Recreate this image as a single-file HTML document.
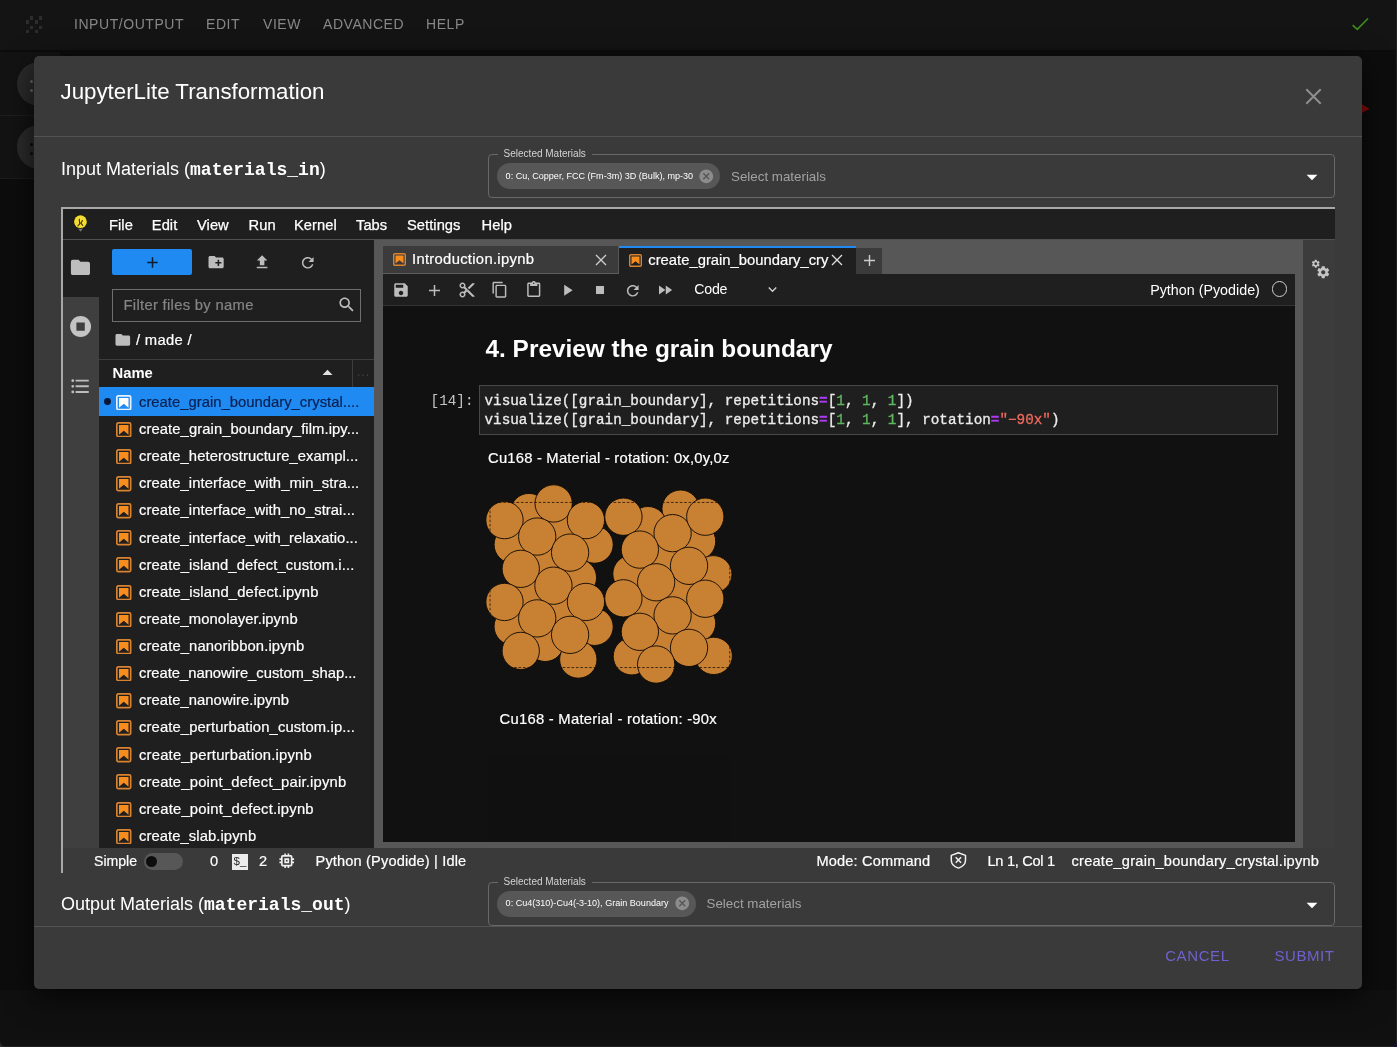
<!DOCTYPE html>
<html>
<head>
<meta charset="utf-8">
<title>JupyterLite Transformation</title>
<style>
*{box-sizing:border-box;margin:0;padding:0}
html,body{width:1397px;height:1047px;overflow:hidden;background:#0d0d0d}
body{position:relative;font-family:"Liberation Sans",sans-serif;color:#fff;-webkit-font-smoothing:antialiased}
#root{position:absolute;left:0;top:0;width:1397px;height:1047px;overflow:hidden;will-change:transform;transform:translateZ(0)}
.abs{position:absolute}
.t{position:absolute;white-space:nowrap;line-height:1}
/* ---- app background ---- */
#topbar{left:0;top:0;width:1397px;height:50px;background:#141414;border-bottom:2px solid #0c0c0c;height:52px}
#topbar .t{font-size:14px;color:#878787;top:17px;letter-spacing:.55px}
#row1{left:0;top:52px;width:60px;height:127px;background:#131313;border-bottom:1px solid #1c1c1c}
#row2{left:0;top:115px;width:60px;height:1px;background:#1e1e1e}
.fab{width:44px;height:44px;border-radius:22px;background:#2b2b2b}
#bottomstrip{left:0;top:990px;width:1397px;height:57px;background:#101010}
/* ---- dialog ---- */
#dlg{left:34px;top:56px;width:1328px;height:933px;background:#3a3a3a;border-radius:5px;box-shadow:0 8px 30px rgba(0,0,0,.7)}
.hr{position:absolute;height:1px;background:#525252}
.sel{position:absolute;border:1px solid #686868;border-radius:4px}
.sel .lab{position:absolute;left:8.6px;top:-6.8px;padding:0 6px;background:#3a3a3a;font-size:10px;line-height:12px;color:#d4d4d4;white-space:nowrap}
.chip{position:absolute;height:26px;border-radius:13px;background:#575757}
.chip span{position:absolute;left:8.6px;top:8px;font-size:9.05px;line-height:10px;color:#fff;white-space:nowrap}
.ph{position:absolute;margin-top:.7px;font-size:13.35px;line-height:14px;color:#a2a2a2;white-space:nowrap}
.btn{position:absolute;font-size:15px;line-height:16px;color:#6f60cf;letter-spacing:.59px;white-space:nowrap}
/* ---- jupyter ---- */
#jl{left:61px;top:207px;width:1274px;height:640px;background:#1f1f1f;overflow:hidden}
#jl .t{color:#fff}
.menu .t{font-size:14.6px;top:11px}
.row{position:absolute;left:38px;width:274px;height:27px}
.row .nm{position:absolute;left:40px;top:6px;font-size:14.3px;line-height:16px;color:#fff;white-space:nowrap}
.row svg{position:absolute;left:17px;top:6px}
.mono{font-family:"Liberation Mono",monospace}

.mi{-webkit-text-stroke:.25px;top:217.5px;font-size:14.7px;letter-spacing:.05px;color:#fff}
.fn{-webkit-text-stroke:.2px;-webkit-text-stroke:.2px;font-size:14.8px;letter-spacing:.09px}
.code{font-size:14.31px;color:#ececec;-webkit-text-stroke:.3px}
.code b{color:#aa3cf0;font-weight:bold}
.code i{color:#5fb760;font-style:normal}
.code u{color:#ee6a5c;text-decoration:none}
.sb{-webkit-text-stroke:.2px;top:853.5px;font-size:14.6px;letter-spacing:.15px;color:#fff}
</style>
</head>
<body>
<div id="root">
<!-- app background -->
<div id="topbar" class="abs">
  <div class="t" style="left:74px">INPUT/OUTPUT</div>
  <div class="t" style="left:206px">EDIT</div>
  <div class="t" style="left:263px">VIEW</div>
  <div class="t" style="left:323px">ADVANCED</div>
  <div class="t" style="left:426px">HELP</div>
</div>
<div id="row1" class="abs"></div>
<div id="row2" class="abs"></div>
<div class="abs fab" style="left:16.6px;top:62px"></div>
<div class="abs fab" style="left:16.6px;top:124.7px"></div>
<div class="abs" style="left:30.0px;top:16.3px;width:3.4px;height:3.4px;background:#2d2d2d"></div><div class="abs" style="left:38.8px;top:16.3px;width:3.4px;height:3.4px;background:#2d2d2d"></div><div class="abs" style="left:25.7px;top:20.3px;width:3.4px;height:3.4px;background:#2d2d2d"></div><div class="abs" style="left:34.5px;top:20.3px;width:3.4px;height:3.4px;background:#2d2d2d"></div><div class="abs" style="left:30.0px;top:25.5px;width:3.4px;height:3.4px;background:#2d2d2d"></div><div class="abs" style="left:39.0px;top:25.5px;width:3.4px;height:3.4px;background:#2d2d2d"></div><div class="abs" style="left:25.7px;top:29.6px;width:3.4px;height:3.4px;background:#2d2d2d"></div><div class="abs" style="left:34.5px;top:29.6px;width:3.4px;height:3.4px;background:#2d2d2d"></div><svg class="abs" style="left:1350px;top:15px" width="20" height="18" viewBox="0 0 20 18"><path d="M2.6 10.1L7.3 14.4L18 3.5" fill="none" stroke="#3f8a1c" stroke-width="1.7"/></svg><svg class="abs" style="left:1361px;top:103px" width="10" height="12" viewBox="0 0 10 12"><path d="M0 0.8L8.6 5.8L0 10.6z" fill="#8a0a0a"/></svg>
<div class="abs" style="left:29.6px;top:79.6px;width:3.4px;height:3.4px;border-radius:2px;background:#6a6a6a"></div><div class="abs" style="left:29.6px;top:88.8px;width:3.4px;height:3.4px;border-radius:2px;background:#6a6a6a"></div><div class="abs" style="left:29.6px;top:143.0px;width:3.4px;height:3.4px;border-radius:2px;background:#0a0a0a"></div><div class="abs" style="left:29.6px;top:151.8px;width:3.4px;height:3.4px;border-radius:2px;background:#0a0a0a"></div>
<div id="bottomstrip" class="abs"></div>
<div class="abs" style="left:1396px;top:0;width:1px;height:1047px;background:#222"></div>
<div class="abs" style="left:0;top:1046px;width:1397px;height:1px;background:#222"></div>
<svg class="abs" style="left:1391px;top:1041px" width="6" height="6" viewBox="0 0 6 6"><path d="M6 0V6H0A6 6 0 0 0 6 0z" fill="#170f45"/></svg>
<svg class="abs" style="left:0;top:1041px" width="6" height="6" viewBox="0 0 6 6"><path d="M0 0V6H6A6 6 0 0 1 0 0z" fill="#2a2a30"/></svg>

<!-- dialog -->
<div id="dlg" class="abs">
  <div class="t" style="left:26.5px;top:24.6px;font-size:22.3px;color:#fff">JupyterLite Transformation</div>
  <div class="hr" style="left:0;top:80px;width:1328px"></div>
  <div class="t" style="left:27px;top:104px;font-size:18px">Input Materials (<span class="mono" style="font-weight:bold">materials_in</span>)</div>
  <div class="sel" style="left:454px;top:98px;width:847px;height:44px">
    <div class="lab">Selected Materials</div>
    <div class="chip" style="left:8px;top:8px;width:223px"><span>0: Cu, Copper, FCC (Fm-3m) 3D (Bulk), mp-30</span></div>
    <div class="ph" style="left:242px;top:14px">Select materials</div>
  </div>
  <div class="t" style="left:27px;top:839px;font-size:18px">Output Materials (<span class="mono" style="font-weight:bold">materials_out</span>)</div>
  <div class="sel" style="left:454px;top:826px;width:847px;height:44px">
    <div class="lab">Selected Materials</div>
    <div class="chip" style="left:8px;top:7.5px;width:199px"><span style="top:7.5px">0: Cu4(310)-Cu4(-3-10), Grain Boundary</span></div>
    <div class="ph" style="left:217.5px;top:13px">Select materials</div>
  </div>
  <div class="hr" style="left:0;top:870px;width:1328px"></div>
  <div class="btn" style="left:1131.2px;top:892.3px">CANCEL</div>
  <div class="btn" style="left:1240.4px;top:892.3px">SUBMIT</div>
</div>


<!-- jupyter -->
<div class="abs" style="left:61px;top:207px;width:1274px;height:2px;background:#a8a8a8"></div>
<div class="abs" style="left:61px;top:207px;width:2px;height:666px;background:#a8a8a8"></div>
<div id="menubar" class="abs menu" style="left:63px;top:209px;width:1272px;height:31px;background:#1f1f1f;border-bottom:1px solid #505050"></div>
<div class="t mi" style="left:109px">File</div>
<div class="t mi" style="left:151.8px">Edit</div>
<div class="t mi" style="left:197px">View</div>
<div class="t mi" style="left:248.6px">Run</div>
<div class="t mi" style="left:294px">Kernel</div>
<div class="t mi" style="left:356px">Tabs</div>
<div class="t mi" style="left:407px">Settings</div>
<div class="t mi" style="left:481.6px">Help</div>
<!-- left sidebar -->
<div class="abs" style="left:63px;top:239px;width:36px;height:609px;background:#3f3f3f"></div>
<div class="abs" style="left:63px;top:239px;width:36px;height:58px;background:#1f1f1f"></div>
<!-- file browser -->
<div class="abs" style="left:99px;top:239px;width:275px;height:609px;background:#1f1f1f"></div>
<div class="abs" style="left:112px;top:249px;width:80px;height:26px;background:#1f8af1;border-radius:2px"></div>
<div class="abs" style="left:112px;top:289px;width:249px;height:33px;border:1px solid #6e6e6e"></div>
<div class="t" style="left:123.5px;top:298px;-webkit-text-stroke:.2px;font-size:14.8px;letter-spacing:.3px;color:#858585">Filter files by name</div>
<div class="t" style="left:136px;top:333px;-webkit-text-stroke:.2px;font-size:14.8px;letter-spacing:.3px;color:#fff">/ made /</div>
<div class="abs" style="left:99px;top:359px;width:275px;height:1px;background:#3d3d3d"></div>
<div class="abs" style="left:352px;top:360px;width:1px;height:27px;background:#3d3d3d"></div>
<div class="t" style="left:112.5px;top:365.8px;font-size:14.8px;font-weight:bold;color:#fff">Name</div>
<div class="t" style="left:357px;top:366px;font-size:12px;color:#444;letter-spacing:1px">...</div>
<div class="abs" style="left:99px;top:387.3px;width:275px;height:28.7px;background:#1f8af1"></div><div class="abs" style="left:104.2px;top:398.2px;width:6.8px;height:6.8px;border-radius:3.4px;background:#06183a"></div><svg class="abs" style="left:116px;top:394.6px" width="15.5" height="15.5" viewBox="0 0 13 13"><rect x="0.7" y="0.7" width="11.6" height="11.6" rx="1.1" fill="none" stroke="#e6f1ff" stroke-width="1.4"/><path d="M2.500 2.500h8v8.100L6.500 7.300 2.500 10.600z" fill="#ffffff"/></svg><div class="t fn" style="left:139px;top:394.8px;color:#0a2050;letter-spacing:0.020px">create_grain_boundary_crystal....</div><svg class="abs" style="left:116px;top:421.7px" width="15.5" height="15.5" viewBox="0 0 13 13"><rect x="0.7" y="0.7" width="11.6" height="11.6" rx="1.1" fill="none" stroke="#d9822f" stroke-width="1.4"/><path d="M2.500 2.500h8v8.100L6.500 7.300 2.500 10.600z" fill="#f78c1f"/></svg><div class="t fn" style="left:139px;top:421.9px;color:#fff;letter-spacing:0.079px">create_grain_boundary_film.ipy...</div><svg class="abs" style="left:116px;top:448.9px" width="15.5" height="15.5" viewBox="0 0 13 13"><rect x="0.7" y="0.7" width="11.6" height="11.6" rx="1.1" fill="none" stroke="#d9822f" stroke-width="1.4"/><path d="M2.500 2.500h8v8.100L6.500 7.300 2.500 10.600z" fill="#f78c1f"/></svg><div class="t fn" style="left:139px;top:449.1px;color:#fff;letter-spacing:0.071px">create_heterostructure_exampl...</div><svg class="abs" style="left:116px;top:476.0px" width="15.5" height="15.5" viewBox="0 0 13 13"><rect x="0.7" y="0.7" width="11.6" height="11.6" rx="1.1" fill="none" stroke="#d9822f" stroke-width="1.4"/><path d="M2.500 2.500h8v8.100L6.500 7.300 2.500 10.600z" fill="#f78c1f"/></svg><div class="t fn" style="left:139px;top:476.2px;color:#fff;letter-spacing:0.071px">create_interface_with_min_stra...</div><svg class="abs" style="left:116px;top:503.1px" width="15.5" height="15.5" viewBox="0 0 13 13"><rect x="0.7" y="0.7" width="11.6" height="11.6" rx="1.1" fill="none" stroke="#d9822f" stroke-width="1.4"/><path d="M2.500 2.500h8v8.100L6.500 7.300 2.500 10.600z" fill="#f78c1f"/></svg><div class="t fn" style="left:139px;top:503.3px;color:#fff;letter-spacing:0.065px">create_interface_with_no_strai...</div><svg class="abs" style="left:116px;top:530.3px" width="15.5" height="15.5" viewBox="0 0 13 13"><rect x="0.7" y="0.7" width="11.6" height="11.6" rx="1.1" fill="none" stroke="#d9822f" stroke-width="1.4"/><path d="M2.500 2.500h8v8.100L6.500 7.300 2.500 10.600z" fill="#f78c1f"/></svg><div class="t fn" style="left:139px;top:530.5px;color:#fff;letter-spacing:0.051px">create_interface_with_relaxatio...</div><svg class="abs" style="left:116px;top:557.4px" width="15.5" height="15.5" viewBox="0 0 13 13"><rect x="0.7" y="0.7" width="11.6" height="11.6" rx="1.1" fill="none" stroke="#d9822f" stroke-width="1.4"/><path d="M2.500 2.500h8v8.100L6.500 7.300 2.500 10.600z" fill="#f78c1f"/></svg><div class="t fn" style="left:139px;top:557.6px;color:#fff;letter-spacing:0.099px">create_island_defect_custom.i...</div><svg class="abs" style="left:116px;top:584.5px" width="15.5" height="15.5" viewBox="0 0 13 13"><rect x="0.7" y="0.7" width="11.6" height="11.6" rx="1.1" fill="none" stroke="#d9822f" stroke-width="1.4"/><path d="M2.500 2.500h8v8.100L6.500 7.300 2.500 10.600z" fill="#f78c1f"/></svg><div class="t fn" style="left:139px;top:584.7px;color:#fff;letter-spacing:0.137px">create_island_defect.ipynb</div><svg class="abs" style="left:116px;top:611.6px" width="15.5" height="15.5" viewBox="0 0 13 13"><rect x="0.7" y="0.7" width="11.6" height="11.6" rx="1.1" fill="none" stroke="#d9822f" stroke-width="1.4"/><path d="M2.500 2.500h8v8.100L6.500 7.300 2.500 10.600z" fill="#f78c1f"/></svg><div class="t fn" style="left:139px;top:611.8px;color:#fff;letter-spacing:0.072px">create_monolayer.ipynb</div><svg class="abs" style="left:116px;top:638.8px" width="15.5" height="15.5" viewBox="0 0 13 13"><rect x="0.7" y="0.7" width="11.6" height="11.6" rx="1.1" fill="none" stroke="#d9822f" stroke-width="1.4"/><path d="M2.500 2.500h8v8.100L6.500 7.300 2.500 10.600z" fill="#f78c1f"/></svg><div class="t fn" style="left:139px;top:639.0px;color:#fff;letter-spacing:0.105px">create_nanoribbon.ipynb</div><svg class="abs" style="left:116px;top:665.9px" width="15.5" height="15.5" viewBox="0 0 13 13"><rect x="0.7" y="0.7" width="11.6" height="11.6" rx="1.1" fill="none" stroke="#d9822f" stroke-width="1.4"/><path d="M2.500 2.500h8v8.100L6.500 7.300 2.500 10.600z" fill="#f78c1f"/></svg><div class="t fn" style="left:139px;top:666.1px;color:#fff;letter-spacing:-0.019px">create_nanowire_custom_shap...</div><svg class="abs" style="left:116px;top:693.0px" width="15.5" height="15.5" viewBox="0 0 13 13"><rect x="0.7" y="0.7" width="11.6" height="11.6" rx="1.1" fill="none" stroke="#d9822f" stroke-width="1.4"/><path d="M2.500 2.500h8v8.100L6.500 7.300 2.500 10.600z" fill="#f78c1f"/></svg><div class="t fn" style="left:139px;top:693.2px;color:#fff;letter-spacing:0.058px">create_nanowire.ipynb</div><svg class="abs" style="left:116px;top:720.2px" width="15.5" height="15.5" viewBox="0 0 13 13"><rect x="0.7" y="0.7" width="11.6" height="11.6" rx="1.1" fill="none" stroke="#d9822f" stroke-width="1.4"/><path d="M2.500 2.500h8v8.100L6.500 7.300 2.500 10.600z" fill="#f78c1f"/></svg><div class="t fn" style="left:139px;top:720.4px;color:#fff;letter-spacing:0.118px">create_perturbation_custom.ip...</div><svg class="abs" style="left:116px;top:747.3px" width="15.5" height="15.5" viewBox="0 0 13 13"><rect x="0.7" y="0.7" width="11.6" height="11.6" rx="1.1" fill="none" stroke="#d9822f" stroke-width="1.4"/><path d="M2.500 2.500h8v8.100L6.500 7.300 2.500 10.600z" fill="#f78c1f"/></svg><div class="t fn" style="left:139px;top:747.5px;color:#fff;letter-spacing:0.207px">create_perturbation.ipynb</div><svg class="abs" style="left:116px;top:774.4px" width="15.5" height="15.5" viewBox="0 0 13 13"><rect x="0.7" y="0.7" width="11.6" height="11.6" rx="1.1" fill="none" stroke="#d9822f" stroke-width="1.4"/><path d="M2.500 2.500h8v8.100L6.500 7.300 2.500 10.600z" fill="#f78c1f"/></svg><div class="t fn" style="left:139px;top:774.6px;color:#fff;letter-spacing:0.195px">create_point_defect_pair.ipynb</div><svg class="abs" style="left:116px;top:801.6px" width="15.5" height="15.5" viewBox="0 0 13 13"><rect x="0.7" y="0.7" width="11.6" height="11.6" rx="1.1" fill="none" stroke="#d9822f" stroke-width="1.4"/><path d="M2.500 2.500h8v8.100L6.500 7.300 2.500 10.600z" fill="#f78c1f"/></svg><div class="t fn" style="left:139px;top:801.8px;color:#fff;letter-spacing:0.213px">create_point_defect.ipynb</div><svg class="abs" style="left:116px;top:828.7px" width="15.5" height="15.5" viewBox="0 0 13 13"><rect x="0.7" y="0.7" width="11.6" height="11.6" rx="1.1" fill="none" stroke="#d9822f" stroke-width="1.4"/><path d="M2.500 2.500h8v8.100L6.500 7.300 2.500 10.600z" fill="#f78c1f"/></svg><div class="t fn" style="left:139px;top:828.9px;color:#fff;letter-spacing:0.072px">create_slab.ipynb</div>
<!-- dock -->
<div class="abs" style="left:374px;top:239px;width:929px;height:609px;background:#575757"></div>
<div class="abs" style="left:1303px;top:239px;width:32px;height:609px;background:#3c3c3c"></div>
<div class="abs" style="left:63px;top:239px;width:1272px;height:1px;background:#505050"></div>
<!-- tabs -->
<div class="abs" style="left:383px;top:246px;width:235px;height:28px;background:#3b3b3b;border-bottom:1px solid #5e5e5e"></div>
<div class="abs" style="left:619px;top:246px;width:237px;height:29px;background:#1f1f1f;border-top:2px solid #1f8af1"></div>
<svg class="abs" style="left:393px;top:253px" width="13" height="13" viewBox="0 0 13 13"><rect x="0.7" y="0.7" width="11.6" height="11.6" rx="1.1" fill="none" stroke="#d9822f" stroke-width="1.4"/><path d="M2.500 2.500h8v8.100L6.500 7.300 2.500 10.600z" fill="#f78c1f"/></svg>
<div class="t" style="left:412px;top:251.5px;-webkit-text-stroke:.2px;font-size:14.8px;letter-spacing:.3px">Introduction.ipynb</div>
<svg class="abs" style="left:629px;top:254px" width="13" height="13" viewBox="0 0 13 13"><rect x="0.7" y="0.7" width="11.6" height="11.6" rx="1.1" fill="none" stroke="#d9822f" stroke-width="1.4"/><path d="M2.500 2.500h8v8.100L6.500 7.300 2.500 10.600z" fill="#f78c1f"/></svg>
<div class="t" style="left:648.3px;top:249px;height:22px;line-height:22px;-webkit-text-stroke:.2px;font-size:14.8px;letter-spacing:0;width:181.2px;overflow:hidden">create_grain_boundary_crystal.ipynb</div>
<!-- toolbar -->
<div class="abs" style="left:383px;top:274px;width:912px;height:32px;background:#1f1f1f;border-bottom:1px solid #333"></div>
<div class="t" style="left:694.3px;top:282.3px;font-size:14.2px;letter-spacing:-.25px">Code</div>
<div class="t" style="left:1150.2px;top:282.5px;font-size:14.3px;letter-spacing:0">Python (Pyodide)</div>
<!-- notebook -->
<div class="abs" style="left:383px;top:306px;width:912px;height:536px;background:#111"></div>
<div class="t" style="left:485.5px;top:336.5px;font-size:24.4px;font-weight:bold">4. Preview the grain boundary</div>
<div class="t mono" style="left:430.6px;top:393.6px;font-size:14.31px;color:#c4c4c4">[14]:</div>
<div class="abs" style="left:479px;top:385px;width:799px;height:50px;background:#1f1f1f;border:1px solid #484848"></div>
<div class="t mono code" style="left:484.5px;top:393.6px">visualize([grain_boundary], repetitions<b>=</b>[<i>1</i>, <i>1</i>, <i>1</i>])</div>
<div class="t mono code" style="left:484.5px;top:412.5px">visualize([grain_boundary], repetitions<b>=</b>[<i>1</i>, <i>1</i>, <i>1</i>], rotation<b>=</b><u>"&#8722;90x"</u>)</div>
<div class="t" style="left:488px;top:450.5px;-webkit-text-stroke:.2px;font-size:14.8px;letter-spacing:.2px">Cu168 - Material - rotation: 0x,0y,0z</div>
<div class="t" style="left:499.5px;top:711.5px;-webkit-text-stroke:.2px;font-size:14.8px;letter-spacing:.26px">Cu168 - Material - rotation: -90x</div>
<div class="abs" style="left:488px;top:754px;width:242px;height:88px;background:#101010"></div>
<svg class="abs" style="left:480px;top:480px" width="260" height="210" viewBox="0 0 1296 1047"><defs><clipPath id="atomclip"><circle cx="244" cy="160" r="93"/><circle cx="163" cy="322" r="93"/><circle cx="407" cy="242" r="93"/><circle cx="571" cy="322" r="93"/><circle cx="325" cy="403" r="93"/><circle cx="488" cy="487" r="93"/><circle cx="244" cy="568" r="93"/><circle cx="163" cy="730" r="93"/><circle cx="407" cy="650" r="93"/><circle cx="571" cy="732" r="93"/><circle cx="325" cy="812" r="93"/><circle cx="490" cy="895" r="93"/><circle cx="1000" cy="143" r="93"/><circle cx="837" cy="225" r="93"/><circle cx="1082" cy="306" r="93"/><circle cx="1163" cy="470" r="93"/><circle cx="755" cy="468" r="93"/><circle cx="918" cy="388" r="93"/><circle cx="1000" cy="553" r="93"/><circle cx="837" cy="635" r="93"/><circle cx="1082" cy="715" r="93"/><circle cx="1165" cy="877" r="93"/><circle cx="757" cy="879" r="93"/><circle cx="918" cy="798" r="93"/><circle cx="367" cy="117" r="93"/><circle cx="122" cy="200" r="93"/><circle cx="285" cy="282" r="93"/><circle cx="528" cy="200" r="93"/><circle cx="449" cy="362" r="93"/><circle cx="203" cy="443" r="93"/><circle cx="366" cy="527" r="93"/><circle cx="122" cy="608" r="93"/><circle cx="528" cy="608" r="93"/><circle cx="285" cy="690" r="93"/><circle cx="449" cy="772" r="93"/><circle cx="203" cy="852" r="93"/><circle cx="715" cy="183" r="93"/><circle cx="960" cy="265" r="93"/><circle cx="1123" cy="183" r="93"/><circle cx="797" cy="347" r="93"/><circle cx="1042" cy="428" r="93"/><circle cx="878" cy="510" r="93"/><circle cx="715" cy="590" r="93"/><circle cx="1123" cy="592" r="93"/><circle cx="960" cy="675" r="93"/><circle cx="797" cy="757" r="93"/><circle cx="1042" cy="837" r="93"/><circle cx="878" cy="920" r="93"/></clipPath></defs><g fill="#c88033" stroke="#100a04" stroke-width="4.6"><circle cx="244" cy="160" r="93"/><circle cx="163" cy="322" r="93"/><circle cx="407" cy="242" r="93"/><circle cx="571" cy="322" r="93"/><circle cx="325" cy="403" r="93"/><circle cx="488" cy="487" r="93"/><circle cx="244" cy="568" r="93"/><circle cx="163" cy="730" r="93"/><circle cx="407" cy="650" r="93"/><circle cx="571" cy="732" r="93"/><circle cx="325" cy="812" r="93"/><circle cx="490" cy="895" r="93"/><circle cx="1000" cy="143" r="93"/><circle cx="837" cy="225" r="93"/><circle cx="1082" cy="306" r="93"/><circle cx="1163" cy="470" r="93"/><circle cx="755" cy="468" r="93"/><circle cx="918" cy="388" r="93"/><circle cx="1000" cy="553" r="93"/><circle cx="837" cy="635" r="93"/><circle cx="1082" cy="715" r="93"/><circle cx="1165" cy="877" r="93"/><circle cx="757" cy="879" r="93"/><circle cx="918" cy="798" r="93"/><circle cx="367" cy="117" r="93"/><circle cx="122" cy="200" r="93"/><circle cx="285" cy="282" r="93"/><circle cx="528" cy="200" r="93"/><circle cx="449" cy="362" r="93"/><circle cx="203" cy="443" r="93"/><circle cx="366" cy="527" r="93"/><circle cx="122" cy="608" r="93"/><circle cx="528" cy="608" r="93"/><circle cx="285" cy="690" r="93"/><circle cx="449" cy="772" r="93"/><circle cx="203" cy="852" r="93"/><circle cx="715" cy="183" r="93"/><circle cx="960" cy="265" r="93"/><circle cx="1123" cy="183" r="93"/><circle cx="797" cy="347" r="93"/><circle cx="1042" cy="428" r="93"/><circle cx="878" cy="510" r="93"/><circle cx="715" cy="590" r="93"/><circle cx="1123" cy="592" r="93"/><circle cx="960" cy="675" r="93"/><circle cx="797" cy="757" r="93"/><circle cx="1042" cy="837" r="93"/><circle cx="878" cy="920" r="93"/></g><rect x="50" y="112" width="1195" height="823" fill="none" stroke="#1a0f03" stroke-width="3.8" stroke-dasharray="13 9" clip-path="url(#atomclip)"/></svg>
<!-- status bar -->
<div class="t sb" style="left:94px;font-size:14.1px;letter-spacing:0">Simple</div>
<div class="abs" style="left:143.5px;top:852.5px;width:39px;height:17px;border-radius:8.5px;background:#575757"></div>
<div class="abs" style="left:145.8px;top:855.5px;width:11px;height:11px;border-radius:6px;background:#0d0d0d"></div>
<div class="t sb" style="left:210px">0</div>
<div class="t sb" style="left:259px">2</div>
<div class="t sb" style="left:315.5px">Python (Pyodide) | Idle</div>
<div class="t sb" style="left:816.5px">Mode: Command</div>
<div class="t sb" style="left:987.5px;letter-spacing:-.3px">Ln 1, Col 1</div>
<div class="t sb" style="left:1071.5px;letter-spacing:.24px">create_grain_boundary_crystal.ipynb</div>
<svg class="abs" style="left:1305.2px;top:87.8px" width="17" height="17" viewBox="0 0 17 17"><path d="M1.3 1.3L15.7 15.700M15.700 1.3L1.3 15.700" stroke="#8e8e8e" stroke-width="2" fill="none"/></svg><svg class="abs" style="left:698.05px;top:167.75px" width="16.5" height="16.5" viewBox="0 0 24 24"><path fill="#8c8c8c" d="M12 2C6.470 2 2 6.470 2 12s4.470 10 10 10 10-4.470 10-10S17.530 2 12 2zm5 13.590L15.590 17 12 13.410 8.410 17 7 15.590 10.590 12 7 8.410 8.410 7 12 10.590 15.590 7 17 8.410 13.410 12 17 15.590z"/></svg><svg class="abs" style="left:673.6px;top:895.2px" width="16.5" height="16.5" viewBox="0 0 24 24"><path fill="#8c8c8c" d="M12 2C6.470 2 2 6.470 2 12s4.470 10 10 10 10-4.470 10-10S17.530 2 12 2zm5 13.590L15.590 17 12 13.410 8.410 17 7 15.590 10.590 12 7 8.410 8.410 7 12 10.590 15.590 7 17 8.410 13.410 12 17 15.590z"/></svg><svg class="abs" style="left:1299.40px;top:163.50px" width="26" height="26" viewBox="0 0 24 24"><path fill="#ffffff" d="M7 10l5 5 5-5z"/></svg><svg class="abs" style="left:1299.40px;top:891.50px" width="26" height="26" viewBox="0 0 24 24"><path fill="#ffffff" d="M7 10l5 5 5-5z"/></svg><svg class="abs" style="left:73px;top:214px" width="16" height="19" viewBox="0 0 16 19"><path d="M5.1 14.4h4.9l-2.45 3.4z" fill="#8c948c" opacity=".75"/><circle cx="7.45" cy="7.7" r="6.9" fill="#1a1203"/><circle cx="7.45" cy="7.7" r="6.4" fill="#f4dd33"/><path d="M6.3 5.2L6.700 9.9L4.900 11.900M9.400 6.400L7.900 9.2L9.700 11.400" stroke="#4a3206" stroke-width="1.15" fill="none" stroke-linecap="round"/></svg><svg class="abs" style="left:69.20px;top:256.15px" width="22.9" height="22.9" viewBox="0 0 24 24"><path fill="#bdbdbd" d="M10 4H4c-1.1 0-1.990.9-1.990 2L2 18c0 1.1.9 2 2 2h16c1.1 0 2-.9 2-2V8c0-1.100-.9-2-2-2h-8l-2-2z"/></svg><svg class="abs" style="left:68px;top:314px" width="25.2" height="25.2" viewBox="0 0 24 24"><path fill="#c4c4c4" d="M12 2C6.480 2 2 6.480 2 12s4.480 10 10 10 10-4.480 10-10S17.520 2 12 2zm4 14H8V8h8v8z"/></svg><svg class="abs" style="left:69.45px;top:374.50px" width="22.6" height="22.6" viewBox="0 0 24 24"><path fill="#bdbdbd" d="M7,5H21V7H7V5M7,13V11H21V13H7M4,4.500A1.500,1.500 0 0,1 5.500,6A1.500,1.500 0 0,1 4,7.500A1.500,1.500 0 0,1 2.500,6A1.500,1.500 0 0,1 4,4.500M4,10.500A1.500,1.500 0 0,1 5.500,12A1.500,1.500 0 0,1 4,13.500A1.500,1.500 0 0,1 2.500,12A1.500,1.500 0 0,1 4,10.500M7,19V17H21V19H7M4,16.500A1.500,1.500 0 0,1 5.500,18A1.500,1.500 0 0,1 4,19.500A1.500,1.500 0 0,1 2.500,18A1.500,1.500 0 0,1 4,16.500Z"/></svg><svg class="abs" style="left:146.500px;top:257px" width="11" height="11" viewBox="0 0 11 11"><path d="M5.500 0.300V10.700M0.300 5.500H10.700" stroke="#0b1d36" stroke-width="1.500" fill="none"/></svg><svg class="abs" style="left:206.90px;top:253.20px" width="18.2" height="18.2" viewBox="0 0 24 24"><path fill="#bdbdbd" d="M20 6h-8l-2-2H4c-1.11 0-1.99.89-1.99 2L2 18c0 1.11.89 2 2 2h16c1.11 0 2-.89 2-2V8c0-1.11-.89-2-2-2zm-1 8h-3v3h-2v-3h-3v-2h3V9h2v3h3v2z"/></svg><svg class="abs" style="left:253.00px;top:253.20px" width="18.2" height="18.2" viewBox="0 0 24 24"><path fill="#bdbdbd" d="M9 16h6v-6h4l-7-7-7 7h4zm-4 2h14v2H5z"/></svg><svg class="abs" style="left:299.45px;top:253.55px" width="17.5" height="17.5" viewBox="0 0 24 24"><path fill="#bdbdbd" d="M17.65 6.35C16.2 4.9 14.21 4 12 4c-4.42 0-7.99 3.58-7.99 8s3.57 8 7.99 8c3.73 0 6.84-2.55 7.73-6h-2.08c-.82 2.33-3.04 4-5.65 4-3.31 0-6-2.69-6-6s2.69-6 6-6c1.66 0 3.14.69 4.22 1.78L13 11h7V4l-2.35 2.35z"/></svg><svg class="abs" style="left:336.50px;top:294.70px" width="19.4" height="19.4" viewBox="0 0 24 24"><path fill="#bdbdbd" d="M15.5 14h-.79l-.28-.27C15.41 12.59 16 11.110 16 9.500 16 5.910 13.090 3 9.500 3S3 5.910 3 9.500 5.910 16 9.500 16c1.610 0 3.090-.59 4.230-1.570l.27.28v.79l5 4.990L20.490 19l-4.990-5zm-6 0C7.010 14 5 11.990 5 9.500S7.010 5 9.500 5 14 7.010 14 9.500 11.990 14 9.500 14z"/></svg><svg class="abs" style="left:114.20px;top:331.20px" width="17.6" height="17.6" viewBox="0 0 24 24"><path fill="#bdbdbd" d="M10 4H4c-1.1 0-1.990.9-1.990 2L2 18c0 1.1.9 2 2 2h16c1.1 0 2-.9 2-2V8c0-1.100-.9-2-2-2h-8l-2-2z"/></svg><svg class="abs" style="left:322.300px;top:368.700px" width="11" height="7" viewBox="0 0 11 7"><path d="M0.500 6L5.500 0.800L10.500 6z" fill="#e0e0e0"/></svg><svg class="abs" style="left:594.8px;top:254.0px" width="12" height="12" viewBox="0 0 12 12"><path d="M1 1L11 11M11 1L1 11" stroke="#d0d0d0" stroke-width="1.3" fill="none"/></svg><svg class="abs" style="left:831.4px;top:254.4px" width="12" height="12" viewBox="0 0 12 12"><path d="M1 1L11 11M11 1L1 11" stroke="#e0e0e0" stroke-width="1.3" fill="none"/></svg><div class="abs" style="left:856px;top:247.500px;width:25.500px;height:26px;background:#3b3b3b"></div><svg class="abs" style="left:863.7px;top:254.9px" width="11" height="11" viewBox="0 0 11 11"><path d="M5.5 0V11M0 5.5H11" stroke="#cccccc" stroke-width="1.4" fill="none"/></svg><svg class="abs" style="left:392.40px;top:281.30px" width="18" height="18" viewBox="0 0 24 24"><path fill="#bdbdbd" d="M17 3H5c-1.11 0-2 .9-2 2v14c0 1.1.89 2 2 2h14c1.1 0 2-.9 2-2V7l-4-4zm-5 16c-1.66 0-3-1.34-3-3s1.34-3 3-3 3 1.34 3 3-1.34 3-3 3zm3-10H5V5h10v4z"/></svg><svg class="abs" style="left:458.30px;top:281.30px" width="18" height="18" viewBox="0 0 24 24"><path fill="#bdbdbd" d="M9.64 7.64c.23-.5.36-1.05.36-1.64 0-2.21-1.79-4-4-4S2 3.790 2 6s1.79 4 4 4c.59 0 1.14-.13 1.64-.36L10 12l-2.36 2.36C7.14 14.13 6.59 14 6 14c-2.21 0-4 1.79-4 4s1.79 4 4 4 4-1.79 4-4c0-.59-.13-1.14-.36-1.640L12 14l7 7h3v-1L9.64 7.640zM6 8c-1.1 0-2-.89-2-2s.9-2 2-2 2 .89 2 2-.9 2-2 2zm0 12c-1.1 0-2-.89-2-2s.9-2 2-2 2 .89 2 2-.9 2-2 2zm6-7.5c-.28 0-.5-.22-.5-.5s.22-.5.5-.5.5.22.5.5-.22.5-.5.500zM19 3l-6 6 2 2 7-7V3z"/></svg><svg class="abs" style="left:491.45px;top:280.85px" width="17.5" height="17.5" viewBox="0 0 24 24"><path fill="#bdbdbd" d="M16 1H4c-1.1 0-2 .9-2 2v14h2V3h12V1zm3 4H8c-1.1 0-2 .9-2 2v14c0 1.1.9 2 2 2h11c1.1 0 2-.9 2-2V7c0-1.1-.9-2-2-2zm0 16H8V7h11v14z"/></svg><svg class="abs" style="left:524.65px;top:280.85px" width="17.5" height="17.5" viewBox="0 0 24 24"><path fill="#bdbdbd" d="M19 2h-4.180C14.4.84 13.3 0 12 0c-1.3 0-2.400.84-2.820 2H5c-1.1 0-2 .9-2 2v16c0 1.1.9 2 2 2h14c1.1 0 2-.9 2-2V4c0-1.1-.9-2-2-2zm-7 0c.55 0 1 .45 1 1s-.45 1-1 1-1-.45-1-1 .45-1 1-1zm7 18H5V4h2v3h10V4h2v16z"/></svg><svg class="abs" style="left:558.25px;top:281.05px" width="18.5" height="18.5" viewBox="0 0 24 24"><path fill="#bdbdbd" d="M8 5v14l11-7z"/></svg><svg class="abs" style="left:591.70px;top:282.20px" width="16" height="16" viewBox="0 0 24 24"><path fill="#bdbdbd" d="M6 6h12v12H6z"/></svg><svg class="abs" style="left:623.55px;top:281.55px" width="17.5" height="17.5" viewBox="0 0 24 24"><path fill="#bdbdbd" d="M17.65 6.35C16.2 4.9 14.21 4 12 4c-4.42 0-7.99 3.58-7.99 8s3.57 8 7.99 8c3.73 0 6.84-2.55 7.73-6h-2.08c-.82 2.33-3.04 4-5.65 4-3.31 0-6-2.69-6-6s2.69-6 6-6c1.66 0 3.14.69 4.22 1.78L13 11h7V4l-2.35 2.35z"/></svg><svg class="abs" style="left:656.40px;top:281.30px" width="18" height="18" viewBox="0 0 24 24"><path fill="#bdbdbd" d="M4 18l8.5-6L4 6v12zm9-12v12l8.5-6L13 6z"/></svg><svg class="abs" style="left:428.9px;top:284.9px" width="11" height="11" viewBox="0 0 11 11"><path d="M5.5 0V11M0 5.5H11" stroke="#bdbdbd" stroke-width="1.5" fill="none"/></svg><svg class="abs" style="left:763.50px;top:281.20px" width="17" height="17" viewBox="0 0 24 24"><path fill="#d0d0d0" d="M7.41 8.59L12 13.17l4.59-4.58L18 10l-6 6-6-6 1.410-1.410z"/></svg><div class="abs" style="left:1271.500px;top:281.300px;width:15.600px;height:15.600px;border-radius:8px;border:1.400px solid #cfcfcf"></div><svg class="abs" style="left:1310.65px;top:259.25px" width="9.5" height="9.5" viewBox="0 0 24 24"><path fill="#c6c6c6" d="M19.430 12.980c.04-.32.07-.64.07-.98s-.03-.66-.07-.98l2.110-1.650c.19-.15.24-.42.12-.64l-2-3.460c-.12-.22-.39-.3-.61-.22l-2.490 1c-.52-.4-1.080-.73-1.690-.98l-.38-2.650C14.460 2.180 14.250 2 14 2h-4c-.25 0-.46.18-.49.420l-.38 2.650c-.61.25-1.170.59-1.690.98l-2.490-1c-.23-.09-.49 0-.61.220l-2 3.460c-.13.22-.07.49.12.64l2.110 1.650c-.04.32-.07.65-.07.98s.03.66.07.98l-2.110 1.650c-.19.15-.24.42-.12.640l2 3.460c.12.22.39.3.61.220l2.490-1c.52.4 1.080.73 1.690.98l.38 2.650c.03.24.24.42.49.420h4c.25 0 .46-.18.49-.42l.38-2.650c.61-.25 1.170-.59 1.690-.98l2.490 1c.23.09.49 0 .61-.22l2-3.460c.12-.22.07-.49-.12-.64l-2.110-1.650zM12 15.500c-1.930 0-3.500-1.570-3.500-3.500s1.570-3.500 3.500-3.500 3.500 1.570 3.500 3.500-1.570 3.500-3.500 3.500z"/></svg><svg class="abs" style="left:1316.05px;top:264.55px" width="14.5" height="14.5" viewBox="0 0 24 24"><path fill="#c6c6c6" d="M19.430 12.980c.04-.32.07-.64.07-.98s-.03-.66-.07-.98l2.110-1.650c.19-.15.24-.42.12-.64l-2-3.460c-.12-.22-.39-.3-.61-.22l-2.490 1c-.52-.4-1.080-.73-1.690-.98l-.38-2.650C14.460 2.180 14.250 2 14 2h-4c-.25 0-.46.18-.49.420l-.38 2.650c-.61.25-1.170.59-1.690.98l-2.490-1c-.23-.09-.49 0-.61.220l-2 3.460c-.13.22-.07.49.12.64l2.110 1.650c-.04.32-.07.65-.07.98s.03.66.07.98l-2.110 1.650c-.19.15-.24.42-.12.640l2 3.460c.12.22.39.3.61.220l2.490-1c.52.4 1.080.73 1.690.98l.38 2.650c.03.24.24.42.49.420h4c.25 0 .46-.18.49-.42l.38-2.650c.61-.25 1.170-.59 1.690-.98l2.490 1c.23.09.49 0 .61-.22l2-3.460c.12-.22.07-.49-.12-.64l-2.110-1.650zM12 15.500c-1.930 0-3.500-1.570-3.500-3.500s1.570-3.500 3.500-3.500 3.500 1.570 3.500 3.500-1.570 3.500-3.500 3.500z"/></svg><div class="abs" style="left:231.700px;top:853.500px;width:16.500px;height:16.500px;background:#ececec"></div><div class="t" style="left:233.4px;top:855.8px;font-size:11.5px;color:#2a2a2a;letter-spacing:.2px">$_</div><svg class="abs" style="left:277.15px;top:851.05px" width="19.5" height="19.5" viewBox="0 0 24 24"><path fill="#f0f0f0" d="M15 9H9v6h6V9zm-2 4h-2v-2h2v2zm8-2V9h-2V7c0-1.100-.9-2-2-2h-2V3h-2v2h-2V3H9v2H7c-1.100 0-2 .9-2 2v2H3v2h2v2H3v2h2v2c0 1.100.9 2 2 2h2v2h2v-2h2v2h2v-2h2c1.100 0 2-.9 2-2v-2h2v-2h-2v-2h2zm-4 6H7V7h10v10z"/></svg><svg class="abs" style="left:949px;top:851px" width="19" height="19" viewBox="0 0 19 19"><path d="M9.400 1.800L16.500 4.400V9.300C16.500 12.800 13.600 15.800 9.400 17.100C5.200 15.800 2.300 12.800 2.300 9.300V4.400Z" fill="none" stroke="#f2f2f2" stroke-width="1.500" stroke-linejoin="round"/><path d="M6.700 6.300L12.100 11.700M12.100 6.300L6.700 11.700" stroke="#f2f2f2" stroke-width="1.500"/></svg>
</div>
</body>
</html>
